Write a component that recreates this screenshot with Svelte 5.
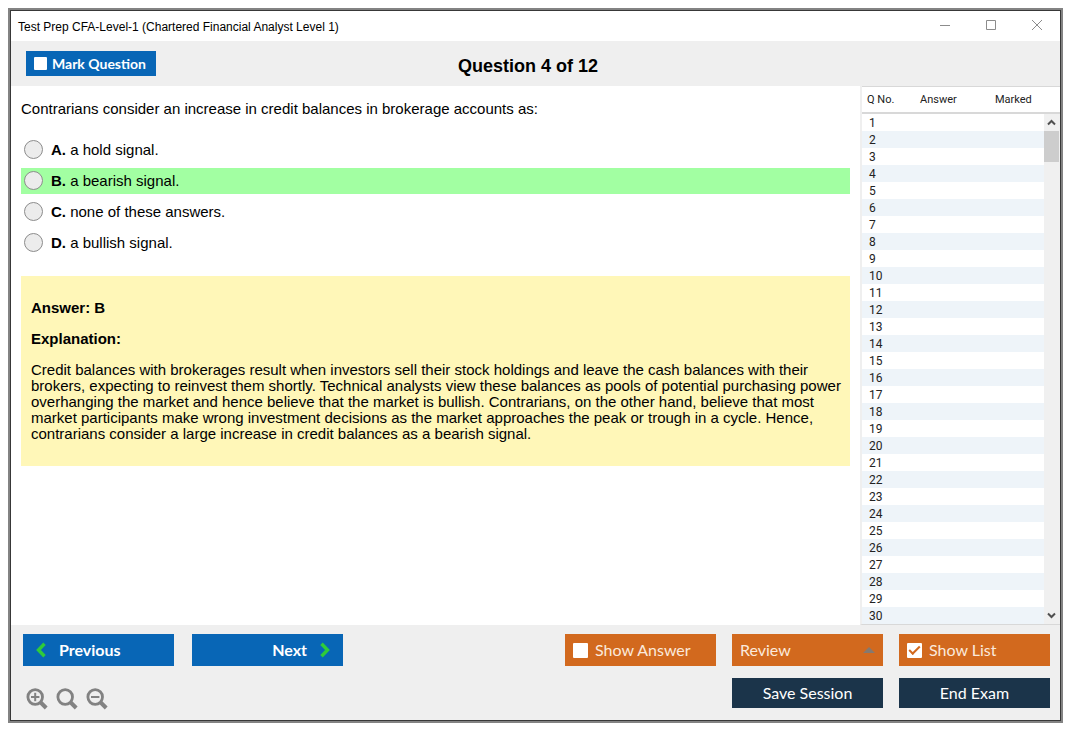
<script>
  const options = [
    { key: 'A', text: 'a hold signal.' },
    { key: 'B', text: 'a bearish signal.' },
    { key: 'C', text: 'none of these answers.' },
    { key: 'D', text: 'a bullish signal.' }
  ];
  const correct = 'B';
  const total = 12;
  const rows = Array.from({ length: 30 }, (_, i) => i + 1);

  let current = $state(4);
  let selected = $state(null);
  let marked = $state(false);
  let showAnswer = $state(false);
  let showList = $state(true);
  let list;

  function go(step) {
    current = Math.min(total, Math.max(1, current + step));
  }

  function scrollList(step) {
    list.scrollBy({ top: step * 17 });
  }
</script>

{#snippet lens(sign)}
  <svg viewBox="0 0 22 22" width="22" height="22" fill="none" stroke="#828282">
    <circle cx="9.2" cy="9" r="7.3" stroke-width="2.8" />
    <path d="M14.2 14 L20.2 20" stroke-width="4" />
    {#if sign !== ''}
      <path d="M5 9 H13.4" stroke-width="2" />
    {/if}
    {#if sign === '+'}
      <path d="M9.2 4.8 V13.2" stroke-width="2" />
    {/if}
  </svg>
{/snippet}

<div class="window">
  <!-- Title bar -->
  <div class="titlebar">
    <span class="app-name">Test Prep CFA-Level-1 (Chartered Financial Analyst Level 1)</span>
    <button class="win-btn" aria-label="Minimize">
      <svg viewBox="0 0 12 12" width="12" height="12"><path d="M1 6.5 H11" /></svg>
    </button>
    <button class="win-btn" aria-label="Maximize">
      <svg viewBox="0 0 12 12" width="12" height="12"><path d="M1.5 1.5 H10.5 V10.5 H1.5 Z" /></svg>
    </button>
    <button class="win-btn" aria-label="Close">
      <svg viewBox="0 0 12 12" width="12" height="12"><path d="M1 1 L11 11 M11 1 L1 11" /></svg>
    </button>
  </div>

  <!-- Header -->
  <header class="header">
    <label class="mark">
      <input type="checkbox" class="check small" bind:checked={marked} />
      Mark Question
    </label>
    <h1>Question {current} of {total}</h1>
  </header>

  <div class="main">
    <main class="content">
      <p id="question">Contrarians consider an increase in credit balances in brokerage accounts as:</p>

      <div class="options" role="radiogroup" aria-labelledby="question">
        {#each options as opt}
          <label class="option" class:correct={opt.key === correct}>
            <input type="radio" name="answer" value={opt.key} bind:group={selected} />
            <span><b>{opt.key}.</b> {opt.text}</span>
          </label>
        {/each}
      </div>

      <section class="explanation">
        <p><b>Answer: {correct}</b></p>
        <p><b>Explanation:</b></p>
        <p>
          Credit balances with brokerages result when investors sell their stock holdings and leave
          the cash balances with their brokers, expecting to reinvest them shortly. Technical analysts
          view these balances as pools of potential purchasing power overhanging the market and hence
          believe that the market is bullish. Contrarians, on the other hand, believe that most market
          participants make wrong investment decisions as the market approaches the peak or trough in
          a cycle. Hence, contrarians consider a large increase in credit balances as a bearish signal.
        </p>
      </section>
    </main>

    {#if showList}
      <aside class="panel">
        <div class="list" bind:this={list}>
          <table>
            <thead>
              <tr><th class="no">Q No.</th><th class="ans">Answer</th><th>Marked</th></tr>
            </thead>
            <tbody>
              {#each rows as n}
                <tr><td>{n}</td><td></td><td></td></tr>
              {/each}
            </tbody>
          </table>
        </div>
        <div class="scrollbar">
          <button aria-label="Scroll up" onclick={() => scrollList(-1)}>
            <svg viewBox="0 0 9 9" width="9" height="9"><path d="M1 6.5 L4.5 3 L8 6.5" /></svg>
          </button>
          <div class="thumb"></div>
          <button class="down" aria-label="Scroll down" onclick={() => scrollList(1)}>
            <svg viewBox="0 0 9 9" width="9" height="9"><path d="M1 2.5 L4.5 6 L8 2.5" /></svg>
          </button>
        </div>
      </aside>
    {/if}
  </div>

  <!-- Footer -->
  <footer class="footer">
    <div class="row">
      <button class="btn blue" onclick={() => go(-1)}>
        <svg viewBox="0 0 10 16" width="10" height="16"><path d="M8.5 1.8 L2.5 8 L8.5 14.2" /></svg>
        Previous
      </button>
      <button class="btn blue next" onclick={() => go(1)}>
        Next
        <svg viewBox="0 0 10 16" width="10" height="16"><path d="M1.5 1.8 L7.5 8 L1.5 14.2" /></svg>
      </button>
      <div class="group">
        <label class="btn orange">
          <input type="checkbox" class="check" bind:checked={showAnswer} />
          Show Answer
        </label>
        <div class="btn orange review">
          <select aria-label="Review"><option>Review</option></select>
          <svg viewBox="0 0 12 6" width="12" height="6"><path d="M0 6 L6 0 L12 6 Z" fill="#85796f" /></svg>
        </div>
        <label class="btn orange">
          <input type="checkbox" class="check" bind:checked={showList} />
          Show List
        </label>
      </div>
    </div>
    <div class="row">
      <div class="zoom">
        <button aria-label="Zoom in">{@render lens('+')}</button>
        <button aria-label="Reset zoom">{@render lens('')}</button>
        <button aria-label="Zoom out">{@render lens('-')}</button>
      </div>
      <div class="group">
        <button class="btn navy">Save Session</button>
        <button class="btn navy">End Exam</button>
      </div>
    </div>
  </footer>
</div>

<style>
  :global(body) {
    margin: 0;
    background: #fff;
  }

  .window {
    box-sizing: border-box;
    display: flex;
    flex-direction: column;
    height: calc(100vh - 20px);
    margin: 8px 12px 12px 8px;
    border: 3px solid #383838;
    outline: 2px solid #838383;
    outline-offset: -2px;
    background: #fff;
    color: #000;
    font-family: "Liberation Sans", Arial, sans-serif;
    font-size: 15px;
    line-height: 16px;
  }

  button {
    margin: 0;
    padding: 0;
    border: none;
    background: none;
    cursor: pointer;
  }

  p { margin: 0; }

  .titlebar {
    display: flex;
    align-items: center;
    height: 30px;
    padding-left: 7px;
  }

  .app-name {
    flex: 1;
    padding-top: 2px;
    font-size: 12px;
  }

  .win-btn {
    display: flex;
    align-items: center;
    justify-content: center;
    width: 46px;
    height: 28px;
    align-self: flex-start;
  }
  .win-btn path {
    fill: none;
    stroke: #8c8c8c;
  }

  .header {
    display: grid;
    grid-template-columns: 1fr auto 1fr;
    align-items: center;
    height: 45px;
    padding: 0 30px 0 15px;
    background: #efefef;
  }

  h1 {
    margin: 4px 0 0;
    font-size: 18px;
    line-height: 20px;
  }

  .mark {
    box-sizing: border-box;
    display: flex;
    align-items: center;
    justify-self: start;
    gap: 5px;
    width: 130px;
    height: 25px;
    padding-left: 8px;
    background: #0866b6;
    color: #fff;
    font: bold 14px/16px Lato, Carlito, sans-serif;
    white-space: nowrap;
  }

  .check {
    appearance: none;
    display: grid;
    place-items: center;
    flex: none;
    width: 15px;
    height: 15px;
    margin: 0;
    border-radius: 1px;
    background: #fff;
  }
  .check.small {
    width: 13px;
    height: 13px;
  }
  .check:checked::after {
    content: '';
    width: 9px;
    height: 4px;
    margin-bottom: 3px;
    border: solid #d2691e;
    border-width: 0 0 2px 2px;
    transform: rotate(-45deg);
  }

  .main {
    display: flex;
    flex: 1;
    min-height: 0;
  }

  .content {
    flex: 1;
    padding: 15px 10px;
    overflow: auto;
    scrollbar-width: none;
  }

  .options {
    display: flex;
    flex-direction: column;
    gap: 5px;
    margin: 20px 0;
  }

  .option {
    display: flex;
    align-items: center;
    gap: 8px;
    height: 26px;
    padding-left: 3px;
  }
  .option.correct { background: #a2ffa2; }
  .option input {
    appearance: none;
    box-sizing: border-box;
    width: 19px;
    height: 19px;
    margin: 0 0 2px;
    border: 1px solid #8c8c8c;
    border-radius: 50%;
    background: #ececec;
  }
  .option input:checked { box-shadow: inset 0 0 0 4px #ececec; background: #333; }

  .explanation {
    display: flex;
    flex-direction: column;
    gap: 15px;
    padding: 24px 4px 24px 10px;
    background: #fff7b8;
  }

  .panel {
    display: flex;
    box-sizing: border-box;
    width: 200px;
    border-left: 2px solid #efefef;
    border-bottom: 1px solid #d8d8d8;
    font: 12px/16px Roboto, sans-serif;
    color: #222;
  }

  .list {
    flex: 1;
    overflow-y: auto;
    scrollbar-width: none;
  }

  table {
    width: 100%;
    table-layout: fixed;
    border-spacing: 0;
  }

  th {
    position: sticky;
    top: 0;
    height: 25px;
    padding: 0;
    border-top: 1px solid #d8d8d8;
    border-bottom: 2px solid #d8d8d8;
    background: #fff;
    font-size: 11px;
    font-weight: normal;
    text-align: left;
  }
  .no {
    width: 53px;
    padding-left: 5px;
  }
  .ans { width: 75px; }

  td {
    height: 16px;
    padding: 1px 0 0;
  }
  td:first-child { padding-left: 7px; }
  tbody tr:nth-child(even) { background: #eef4f9; }

  .scrollbar {
    display: flex;
    flex-direction: column;
    width: 16px;
    background: #f0f0f0;
  }
  .scrollbar::before {
    content: '';
    height: 25px;
    border-top: 1px solid #d8d8d8;
    border-bottom: 2px solid #d8d8d8;
    background: #fff;
  }
  .scrollbar button {
    height: 17px;
    margin-right: 1px;
    line-height: 0;
  }
  .scrollbar path {
    fill: none;
    stroke: #505050;
    stroke-width: 2;
  }
  .scrollbar .down { margin-top: auto; }
  .thumb {
    height: 31px;
    margin-right: 1px;
    background: #cdcdcd;
  }

  .footer {
    display: flex;
    flex-direction: column;
    gap: 12px;
    padding: 9px 10px 10px 12px;
    background: #efefef;
  }

  .row {
    display: flex;
    gap: 18px;
  }

  .group {
    display: flex;
    gap: 16px;
    margin-left: auto;
  }

  .btn {
    box-sizing: border-box;
    display: flex;
    align-items: center;
    width: 151px;
    height: 32px;
    color: #fff;
    font: 16px/20px Lato, Carlito, sans-serif;
    white-space: nowrap;
  }

  .blue {
    background: #0866b6;
    font-weight: bold;
    gap: 13px;
    padding: 0 13px;
  }
  .blue path {
    fill: none;
    stroke: #2fcb3a;
    stroke-width: 3.4;
  }
  .next { justify-content: flex-end; }

  .orange {
    gap: 7px;
    padding: 0 8px;
    background: #d2691e;
    color: #fbe9dc;
  }

  .review select {
    appearance: none;
    flex: 1;
    padding: 0;
    border: none;
    background: none;
    color: inherit;
    font: inherit;
  }

  .navy {
    justify-content: center;
    height: 30px;
    background: #1b344a;
  }

  .zoom {
    display: flex;
    gap: 8px;
    padding: 10px 0 0 3px;
  }
  .zoom button {
    width: 22px;
    height: 22px;
    line-height: 0;
  }
</style>
